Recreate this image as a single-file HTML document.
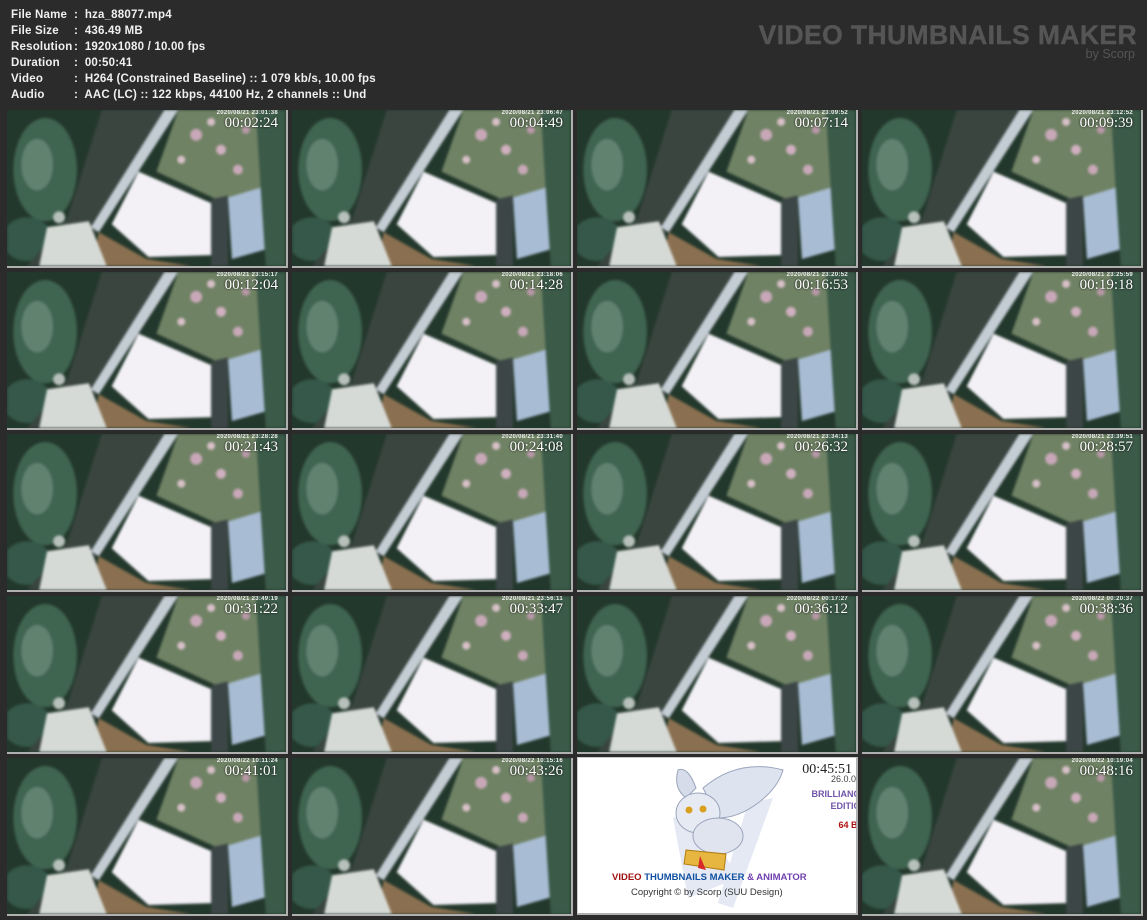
<!DOCTYPE html>
<html><head><meta charset="utf-8"><style>
*{margin:0;padding:0;box-sizing:border-box}
body{width:1147px;height:920px;background:#2b2b2b;position:relative;overflow:hidden;font-family:"Liberation Sans",sans-serif}
.info{position:absolute;left:11px;top:7px;color:#f0f0f0;font-weight:bold;font-size:11.5px;line-height:16px;letter-spacing:0.2px}
.info div{white-space:nowrap}
.info span{display:inline-block;width:63px}
.brand{position:absolute;right:10px;top:22px;text-align:right;color:#555}
.brand b{font-weight:900;font-size:26.5px;letter-spacing:0.4px;display:block;line-height:26px;-webkit-text-stroke:0.4px #555}
.brand i{font-style:normal;font-size:12.5px;display:block;margin-top:-1px;margin-right:2px}
.t{position:absolute;width:281px;height:158px;border-right:2px solid #b0b0b0;border-bottom:2px solid #b0b0b0;overflow:hidden;background:#23382c}
.t svg{position:absolute;left:0;top:0;filter:blur(1.2px)}
.ts{position:absolute;right:8px;top:0px;color:#eee;font-size:6px;font-weight:bold;z-index:2;letter-spacing:0.3px}
.tm{position:absolute;right:8px;top:5px;color:#fff;font-family:"Liberation Serif",serif;font-size:15px;z-index:2;text-shadow:0 0 2px #000}
.logo{position:absolute;left:577px;top:757px;width:281px;height:158px;background:#fff;border:1px solid #ccc;border-right:2px solid #b0b0b0;border-bottom:2px solid #b0b0b0;overflow:hidden}
</style></head><body>
<svg width="0" height="0" style="position:absolute">
<defs>
<symbol id="sc" viewBox="0 0 280 157">
<rect width="280" height="157" fill="#23382c"/>
<ellipse cx="38" cy="60" rx="32" ry="52" fill="#3f6450"/>
<ellipse cx="30" cy="55" rx="16" ry="26" fill="#6c8a78" opacity=".8"/>
<ellipse cx="20" cy="130" rx="25" ry="22" fill="#35584a"/>
<polygon points="95,0 170,0 92,120 55,157 20,157 60,110" fill="#3a4540"/>
<polygon points="158,0 172,0 92,123 84,118" fill="#c4ccd4"/>
<polygon points="172,0 252,0 256,78 215,92 150,62" fill="#6f8264"/>
<circle cx="190" cy="25" r="6" fill="#c8a8b8"/><circle cx="215" cy="40" r="5" fill="#d0b0c0"/>
<circle cx="232" cy="60" r="5" fill="#c8a8b8"/><circle cx="175" cy="50" r="4" fill="#d8c0c8"/>
<circle cx="205" cy="12" r="4" fill="#d8c0c8"/><circle cx="240" cy="20" r="4" fill="#b898a8"/>
<polygon points="92,123 140,150 185,157 85,157" fill="#8a7050"/>
<polygon points="132,62 208,95 206,146 142,148 105,115" fill="#f3f1f6"/>
<polygon points="205,90 222,86 222,157 205,157" fill="#3c4646"/>
<polygon points="222,88 262,76 268,138 226,150" fill="#a8bcd4"/>
<polygon points="250,0 280,0 280,157 260,157 255,80" fill="#3b5a48"/>
<polygon points="40,118 82,112 100,157 32,157" fill="#d6dad6"/>
<circle cx="52" cy="108" r="6" fill="#b8c0bc"/>
</symbol>
</defs></svg>
<div class="info">
<div><span>File Name</span>:&nbsp; hza_88077.mp4</div>
<div><span>File Size</span>:&nbsp; 436.49 MB</div>
<div><span>Resolution</span>:&nbsp; 1920x1080 / 10.00 fps</div>
<div><span>Duration</span>:&nbsp; 00:50:41</div>
<div><span>Video</span>:&nbsp; H264 (Constrained Baseline) :: 1 079 kb/s, 10.00 fps</div>
<div><span>Audio</span>:&nbsp; AAC (LC) :: 122 kbps, 44100 Hz, 2 channels :: Und</div>
</div>
<div class="brand"><b>VIDEO THUMBNAILS MAKER</b><i>by Scorp</i></div>

<div class="t" style="left:7px;top:110px"><svg width="279" height="156"><use href="#sc"/></svg><div class="ts">2020/08/21 23:01:38</div><div class="tm">00:02:24</div></div>
<div class="t" style="left:292px;top:110px"><svg width="279" height="156"><use href="#sc"/></svg><div class="ts">2020/08/21 23:06:47</div><div class="tm">00:04:49</div></div>
<div class="t" style="left:577px;top:110px"><svg width="279" height="156"><use href="#sc"/></svg><div class="ts">2020/08/21 23:09:52</div><div class="tm">00:07:14</div></div>
<div class="t" style="left:862px;top:110px"><svg width="279" height="156"><use href="#sc"/></svg><div class="ts">2020/08/21 23:12:52</div><div class="tm">00:09:39</div></div>

<div class="t" style="left:7px;top:272px"><svg width="279" height="156"><use href="#sc"/></svg><div class="ts">2020/08/21 23:15:17</div><div class="tm">00:12:04</div></div>
<div class="t" style="left:292px;top:272px"><svg width="279" height="156"><use href="#sc"/></svg><div class="ts">2020/08/21 23:18:06</div><div class="tm">00:14:28</div></div>
<div class="t" style="left:577px;top:272px"><svg width="279" height="156"><use href="#sc"/></svg><div class="ts">2020/08/21 23:20:52</div><div class="tm">00:16:53</div></div>
<div class="t" style="left:862px;top:272px"><svg width="279" height="156"><use href="#sc"/></svg><div class="ts">2020/08/21 23:25:59</div><div class="tm">00:19:18</div></div>

<div class="t" style="left:7px;top:434px"><svg width="279" height="156"><use href="#sc"/></svg><div class="ts">2020/08/21 23:28:28</div><div class="tm">00:21:43</div></div>
<div class="t" style="left:292px;top:434px"><svg width="279" height="156"><use href="#sc"/></svg><div class="ts">2020/08/21 23:31:40</div><div class="tm">00:24:08</div></div>
<div class="t" style="left:577px;top:434px"><svg width="279" height="156"><use href="#sc"/></svg><div class="ts">2020/08/21 23:34:13</div><div class="tm">00:26:32</div></div>
<div class="t" style="left:862px;top:434px"><svg width="279" height="156"><use href="#sc"/></svg><div class="ts">2020/08/21 23:39:51</div><div class="tm">00:28:57</div></div>

<div class="t" style="left:7px;top:596px"><svg width="279" height="156"><use href="#sc"/></svg><div class="ts">2020/08/21 23:49:19</div><div class="tm">00:31:22</div></div>
<div class="t" style="left:292px;top:596px"><svg width="279" height="156"><use href="#sc"/></svg><div class="ts">2020/08/21 23:56:11</div><div class="tm">00:33:47</div></div>
<div class="t" style="left:577px;top:596px"><svg width="279" height="156"><use href="#sc"/></svg><div class="ts">2020/08/22 00:17:27</div><div class="tm">00:36:12</div></div>
<div class="t" style="left:862px;top:596px"><svg width="279" height="156"><use href="#sc"/></svg><div class="ts">2020/08/22 00:20:37</div><div class="tm">00:38:36</div></div>

<div class="t" style="left:7px;top:758px"><svg width="279" height="156"><use href="#sc"/></svg><div class="ts">2020/08/22 10:11:24</div><div class="tm">00:41:01</div></div>
<div class="t" style="left:292px;top:758px"><svg width="279" height="156"><use href="#sc"/></svg><div class="ts">2020/08/22 10:15:16</div><div class="tm">00:43:26</div></div>
<div class="logo">
<svg width="280" height="157" style="position:absolute;left:0;top:0">
<path d="M95 60 L120 50 L160 120 L110 140 Z" fill="#e4e9f4"/>
<path d="M170 45 L195 40 L155 150 L140 145 Z" fill="#e4e9f4"/>
<path d="M100 12 Q110 8 118 30 L108 40 Q95 30 100 12Z" fill="#d6dcea" stroke="#9aa4bc" stroke-width="1"/>
<path d="M125 30 Q160 0 205 12 Q200 30 180 45 Q160 60 140 60Z" fill="#dde3ef" stroke="#9aa4bc" stroke-width="1"/>
<ellipse cx="120" cy="55" rx="22" ry="20" fill="#e6eaf3" stroke="#9aa4bc"/>
<ellipse cx="140" cy="78" rx="25" ry="18" fill="#dfe4ef" stroke="#9aa4bc"/>
<circle cx="111" cy="52" r="3.5" fill="#d9a020"/><circle cx="125" cy="51" r="3.5" fill="#d9a020"/>
<path d="M108 92 L148 96 L146 112 L106 106Z" fill="#e7b640" stroke="#b07c10"/>
<path d="M122 98 L128 112 L120 110Z" fill="#d82828"/>
</svg>
<div style="position:absolute;right:4px;top:4px;font-family:'Liberation Serif',serif;font-size:14px;color:#222">00:45:51</div>
<div style="position:absolute;right:0;top:16px;font-size:9px;color:#444">26.0.0</div>
<div style="position:absolute;right:-4px;top:30px;font-size:9px;font-weight:bold;color:#7055a8;text-align:right;line-height:12px">BRILLIANC<br>EDITIC</div>
<div style="position:absolute;right:-4px;top:62px;font-size:9px;font-weight:bold;color:#b01010">64 BI</div>
<div style="position:absolute;left:34px;top:114px;font-size:9.5px;font-weight:bold;white-space:nowrap"><span style="color:#a01010">VIDEO</span> <span style="color:#1050a0">THUMBNAILS MAKER</span> <span style="color:#7040b0">&amp; ANIMATOR</span></div>
<div style="position:absolute;left:53px;top:129px;font-size:9.5px;color:#333;white-space:nowrap">Copyright © by Scorp (SUU Design)</div>
</div>
<div class="t" style="left:862px;top:758px"><svg width="279" height="156"><use href="#sc"/></svg><div class="ts">2020/08/22 10:19:04</div><div class="tm">00:48:16</div></div>
</body></html>
